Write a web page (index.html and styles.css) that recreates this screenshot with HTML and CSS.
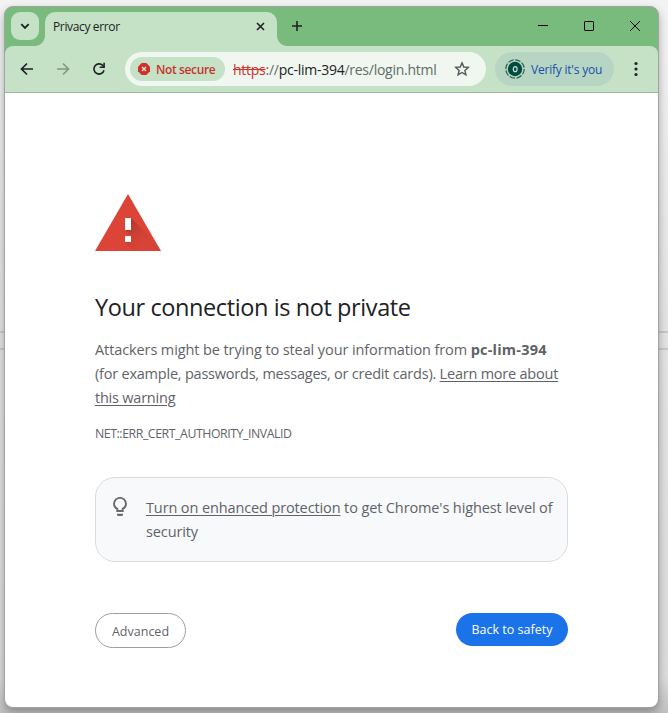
FILE: index.html
```html
<!DOCTYPE html>
<html lang="en">
<head>
<meta charset="utf-8">
<title>Privacy error</title>
<link rel="stylesheet" href="styles.css">
</head>
<body>
<div class="window">
  <header class="titlebar">
    <button class="tab-search" aria-label="Search tabs"><svg width="28" height="28" viewBox="0 0 28 28"><path d="M10.3 12.2l3.7 3.7 3.7-3.7" fill="none" stroke="#202124" stroke-width="1.9"/></svg></button>
    <div class="tab">
      <span class="tab-title">Privacy error</span>
      <svg width="9" height="9" viewBox="0 0 9 9"><path d="M1 1l7 7M8 1L1 8" stroke="#202124" stroke-width="1.6"/></svg>
    </div>
    <svg class="new-tab" width="12" height="12" viewBox="0 0 12 12"><path d="M6 1v10M1 6h10" stroke="#202124" stroke-width="1.6"/></svg>
    <div class="controls">
      <svg width="10" height="10" viewBox="0 0 10 10"><path d="M0 4.5h10" stroke="#000"/></svg>
      <svg width="10" height="10" viewBox="0 0 10 10"><rect x=".5" y=".5" width="9" height="9" rx=".6" fill="none" stroke="#000"/></svg>
      <svg width="10" height="10" viewBox="0 0 10 10"><path d="M0 0l10 10M10 0L0 10" stroke="#000"/></svg>
    </div>
  </header>
  <nav class="toolbar">
    <svg class="back" width="14" height="14" viewBox="0 0 14 14"><path d="M13 7H2M7 1.5L1.5 7 7 12.5" fill="none" stroke="#202124" stroke-width="1.7"/></svg>
    <svg class="forward" width="14" height="14" viewBox="0 0 14 14"><path d="M1 7h11M7 1.5L12.500 7 7 12.5" fill="none" stroke="#82987f" stroke-width="1.6"/></svg>
    <svg class="reload" width="14" height="14" viewBox="0 0 14 14"><path d="M12 8.2A5.100 5.100 0 1 1 10.700 3.400L12 4.700" fill="none" stroke="#202124" stroke-width="1.6"/><path d="M12.900 .7v5.200H7.700V4.400h3.600V.7z" fill="#202124"/></svg>
    <div class="omnibox">
      <div class="chip">
        <svg width="12" height="12" viewBox="0 0 12 12"><path d="M3.700 0h4.600L12 3.700v4.600L8.300 12H3.700L0 8.300V3.700z" fill="#cf302a"/><path d="M4 4l4 4M8 4L4 8" stroke="#d9ead9" stroke-width="1.4"/></svg>
        <span class="chip-label">Not secure</span>
      </div>
      <span class="url"><s>https</s><i>://</i>pc-lim-394<i>/res/login.html</i></span>
      <svg class="star" width="16" height="16" viewBox="0 0 16 16"><path d="M8 1.900l1.800 4.100 4.500.4-3.400 3 1 4.400L8 11.500l-3.900 2.300 1-4.400-3.400-3 4.500-.4z" fill="none" stroke="#50575a" stroke-width="1.400"/></svg>
    </div>
    <div class="profile">
      <svg width="20" height="20" viewBox="0 0 20 20"><circle cx="10" cy="10" r="9.200" fill="none" stroke="#345c4a" stroke-width="1.200" stroke-dasharray="5.600 1.600"/><circle cx="10" cy="10" r="7.200" fill="#004d40"/><ellipse cx="10.200" cy="10.200" rx="1.900" ry="2.500" fill="none" stroke="#c9dfd9" stroke-width="1.200"/></svg>
      <span class="profile-label">Verify it's you</span>
    </div>
    <svg class="menu" width="4" height="16" viewBox="0 0 4 16" fill="#202124"><circle cx="2" cy="2.500" r="1.600"/><circle cx="2" cy="8" r="1.600"/><circle cx="2" cy="13.500" r="1.600"/></svg>
  </nav>
  <main class="page">
    <svg class="warning" width="66" height="57" viewBox="0 0 66 57">
      <defs>
        <linearGradient id="shade" gradientUnits="userSpaceOnUse" x1="33" y1="30" x2="49" y2="46"><stop offset="0" stop-color="#a63228" stop-opacity=".75"/><stop offset="1" stop-color="#c43c31" stop-opacity=".15"/></linearGradient>
        <clipPath id="tri"><path d="M33 0l33 57H0z"/></clipPath>
      </defs>
      <path d="M33 0l33 57H0z" fill="#db4437"/>
      <g clip-path="url(#tri)" fill="url(#shade)"><path d="M36 24l33 33H51L30 36z"/><path d="M36 42l15 15H39l-9-9z"/></g>
      <path d="M30 24h6v12h-6zM30 42h6v6h-6z" fill="#fff"/>
    </svg>
    <h1><span class="heading">Your connection is not private</span></h1>
    <p class="message"><span class="m1">Attackers might be trying to steal your information from <b>pc-lim-394</b></span><br><span class="m2">(for example, passwords, messages, or credit cards). <u>Learn more about</u></span><br><span class="m3"><u>this warning</u></span></p>
    <p class="code"><span class="code-text">NET::ERR_CERT_AUTHORITY_INVALID</span></p>
    <section class="promo">
      <svg width="14" height="20" viewBox="0 0 14 20"><path d="M4.300 14v-2.200C2.200 10.700 1 9 1 6.900a6 6 0 0 1 12 0c0 2.100-1.200 3.800-3.300 4.900V14z" fill="none" stroke="#686a6c" stroke-width="1.900"/><path d="M4 16.800h6v.7a1.500 1.500 0 0 1-1.500 1.500h-3A1.500 1.500 0 0 1 4 17.500z" fill="#686a6c"/></svg>
      <p><span class="p1"><u>Turn on enhanced protection</u> to get Chrome's highest level of</span><br><span class="p2">security</span></p>
    </section>
    <div class="actions">
      <button class="advanced"><span>Advanced</span></button>
      <button class="safety"><span>Back to safety</span></button>
    </div>
  </main>
</div>
</body>
</html>
```
FILE: styles.css
```css
* { box-sizing: border-box; }
html { height: 713px; }
body {
  margin: 0;
  width: 668px;
  height: 713px;
  padding: 6px 9px 5px 4px;
  overflow: hidden;
  font-family: "Open Sans", "Noto Sans", sans-serif;
  background:
    linear-gradient(#c9c9c9, #c9c9c9) 0 331px / 100% 2px no-repeat,
    linear-gradient(#c9c9c9, #c9c9c9) 0 348px / 100% 2px no-repeat,
    linear-gradient(#f3f3f3, #e4e4e4 45%, #dcdcdc 95%, #c0c0c0);
}
svg { display: block; flex: none; }
button { border: 0; padding: 0; font: inherit; }
span { white-space: nowrap; }
.window {
  height: 702px;
  border: 1px solid #a2a4a2;
  border-radius: 9px;
  overflow: hidden;
  background: #79bb7c;
  box-shadow: 0 4px 9px rgba(0, 0, 0, .3);
}
.titlebar {
  height: 39px;
  padding: 5px 18px 0 6px;
  display: flex;
  align-items: flex-start;
}
.tab-search {
  width: 28px;
  height: 28px;
  border-radius: 9px;
  background: #c5e1c6;
}
.tab {
  position: relative;
  width: 232px;
  height: 34px;
  margin-left: 6px;
  padding: 0 12px 5px 8px;
  display: flex;
  align-items: center;
  justify-content: space-between;
  background: #c5e1c6;
  border-radius: 10px 10px 0 0;
}
.tab::before, .tab::after {
  content: "";
  position: absolute;
  bottom: 0;
  width: 10px;
  height: 10px;
}
.tab::before { left: -10px; background: radial-gradient(circle at 0 0, transparent 9.5px, #c5e1c6 10.200px); }
.tab::after { right: -10px; background: radial-gradient(circle at 100% 0, transparent 9.5px, #c5e1c6 10.200px); }
.tab-title { font-size: 12px; letter-spacing: -.36px; color: #202124; }
.new-tab { margin: 8px 0 0 14px; }
.controls { margin: 9px 0 0 auto; display: flex; gap: 36px; }
.toolbar {
  height: 47px;
  padding: 0 20px 0 15px;
  display: flex;
  align-items: center;
  background: #c5e1c6;
  border-radius: 8px 8px 0 0;
  border-bottom: 1px solid #9fb59f;
}
.forward { margin-left: 22px; }
.reload { margin-left: 22px; }
.omnibox {
  width: 361px;
  height: 34px;
  margin-left: 19px;
  padding: 0 16px 0 5px;
  display: flex;
  align-items: center;
  border-radius: 17px;
  background: #f0f7f0;
}
.chip {
  width: 95px;
  height: 24px;
  padding-left: 8px;
  display: flex;
  align-items: center;
  gap: 6px;
  border-radius: 12px;
  background: #c5e1c6;
}
.chip-label { font-size: 12px; letter-spacing: -.38px; font-weight: 600; color: #c5352b; }
.url { margin-left: 8px; font-size: 14px; letter-spacing: -.26px; color: #202124; }
.url i { font-style: normal; color: #626b66; }
.url s { color: #cf302a; }
.star { margin-left: auto; }
.profile {
  width: 119px;
  height: 34px;
  margin-left: 9px;
  padding-left: 10px;
  display: flex;
  align-items: center;
  gap: 6px;
  border-radius: 17px;
  background: #b7d5c3;
}
.profile-label { font-size: 12px; letter-spacing: -.22px; color: #1850a8; }
.menu { margin-left: auto; }
.page {
  height: 614px;
  padding: 101px 90px 0;
  background: #fff;
  color: #5f6368;
}
h1 { margin: 40px 0 0; font-size: 23.500px; letter-spacing: -.4px; line-height: 32px; font-weight: 400; color: #202124; }
p { margin: 0; font-size: 14.500px; line-height: 24px; }
u { text-underline-offset: 2px; text-decoration-thickness: 1px; }
.message { margin-top: 15px; }
.m1 { letter-spacing: -.1px; }
.m1 b { letter-spacing: .2px; }
.m2, .m3 { letter-spacing: -.22px; }
.p1, .p2 { letter-spacing: -.12px; }
.code { margin-top: 12px; font-size: 12.300px; letter-spacing: -.43px; }
.promo {
  width: 473px;
  height: 85px;
  margin-top: 31px;
  padding: 18px 0 0 17px;
  display: flex;
  gap: 19px;
  border: 1px solid #dadce0;
  border-radius: 20px;
  background: #f8f9fb;
}
.promo svg { margin-top: 1px; }
.actions { width: 473px; margin-top: 51px; display: flex; justify-content: space-between; font-size: 12.500px; letter-spacing: -.08px; }
.advanced {
  width: 91px;
  height: 35px;
  padding-top: 1px;
  border: 1px solid #9aa0a6;
  border-radius: 18px;
  background: #fff;
  color: #5f6368;
}
.safety { width: 112px; height: 33px; border-radius: 17px; background: #1a73e8; color: #fff; }
```
